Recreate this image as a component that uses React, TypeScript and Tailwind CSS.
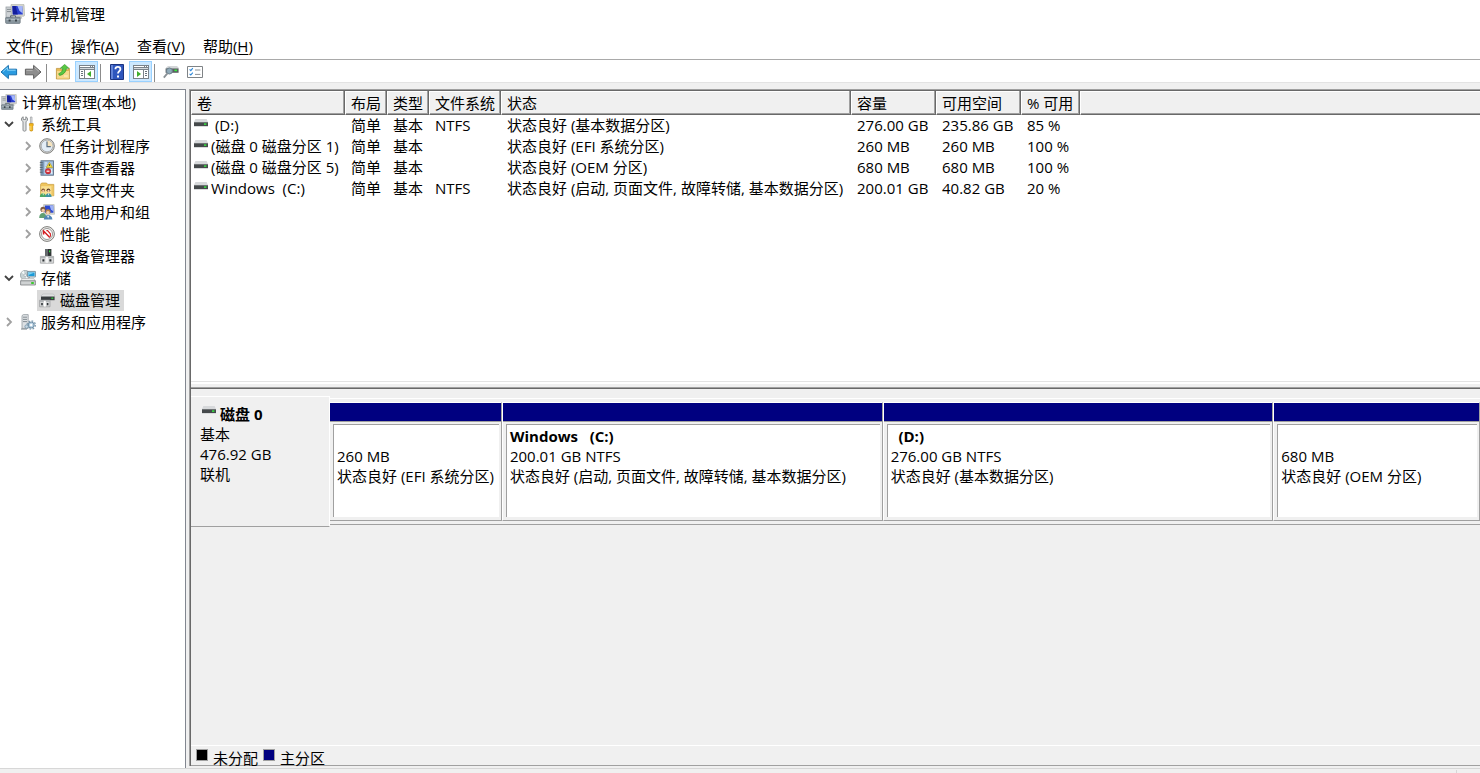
import { useState, type ReactNode } from "react"
import clsx from "clsx"

type IconProps = { size?: number }

function ComputerIcon({ size = 16 }: IconProps) {
  return (
    <svg width={size} height={size} viewBox="0 0 20 20" className="shrink-0">
      <rect x="1" y="3" width="6" height="11" fill="#cfd3d6" stroke="#9aa1a6" strokeWidth=".8" />
      <path d="M2 5.4h4M2 7.6h4" stroke="#868d92" />
      <path d="M6 .6h13l.6 11-1 .6H6.4z" fill="#d6d7d0" stroke="#a9aba4" strokeWidth=".6" />
      <path d="M7.4 2h9.8l.6 8.4H7.8z" fill="#2a3fd0" />
      <path d="M12.4 2h4.8l.5 7.4-3.3-2.6z" fill="#a4b6fa" />
      <path d="M7.4 2h3.2l2.2 8.4h-5z" fill="#141f9c" />
      <path d="M10 12.2h6l1.4 2.2H10z" fill="#b1b5b4" />
      <rect x=".6" y="13.4" width="14.6" height="6" rx=".8" fill="#8a979f" stroke="#65717a" strokeWidth=".7" />
      <path d="M5.5 13.2v-1.4h5v1.4" fill="none" stroke="#5d6970" />
      <path d="M1.4 15.4h13" stroke="#c3ccd2" strokeWidth=".8" />
      <path d="M3.6 15.4v2h2v-2zM10 15.4v2h2v-2z" fill="#3d464c" />
    </svg>
  )
}

function ToolsIcon() {
  return (
    <svg width="16" height="16" viewBox="0 0 16 16" className="shrink-0">
      <path
        d="M3.2.8 1.8 1.8 1.4 4l1.6 1.8v8.4c0 1.3 3 1.3 3 0V5.8L7.6 4l-.4-2.2L5.8.8v2.8H3.2z"
        fill="#e3e4e5"
        stroke="#7f8386"
        strokeWidth=".9"
      />
      <path d="M10.4 1h1.6v6.4h-1.6z" fill="#e6e7e8" stroke="#8b8f92" strokeWidth=".6" />
      <path d="M9.4 7.6h3.8v1.8l-.5.8v4c0 1.2-2.8 1.2-2.8 0v-4l-.5-.8z" fill="#f5b81d" stroke="#c08a13" strokeWidth=".7" />
      <path d="M10.8 10v4" stroke="#ffe390" strokeWidth=".8" />
    </svg>
  )
}

function ClockIcon() {
  return (
    <svg width="16" height="16" viewBox="0 0 16 16" className="shrink-0">
      <circle cx="8" cy="8" r="7.3" fill="#d7d7d5" stroke="#82827f" strokeWidth="1" />
      <circle cx="8" cy="8" r="5.8" fill="#e3edf6" stroke="#9a9fa3" strokeWidth=".7" />
      <path d="M8 8.4V2.4a5.8 5.8 0 0 1 5.6 6z" fill="#f6e3bd" />
      <path d="M8 3.6v5h3.8" fill="none" stroke="#5b6e80" strokeWidth="1.2" />
    </svg>
  )
}

function EventIcon() {
  return (
    <svg width="16" height="16" viewBox="0 0 16 16" className="shrink-0">
      <rect x="2" y=".8" width="12.4" height="14.4" fill="#a7c3e3" stroke="#56697e" strokeWidth=".9" />
      <path d="M2.4 1.2h2.4v13.6H2.4z" fill="#7590ae" />
      <path d="M.8 2.6h2.8M.8 5h2.8M.8 7.4h2.8M.8 9.8h2.8M.8 12.2h2.8" stroke="#545d66" strokeWidth=".9" />
      <path d="M6 3h2M6 5h1.6M6 7.4h1M6 12.8h1M12.6 9v4.6M12 13h1.6" stroke="#eef5fb" strokeWidth=".9" />
      <path d="m10.4 2.4 3.2 5.2H7.2z" fill="#f5dc3c" stroke="#b5950f" strokeWidth=".6" />
      <path d="M10.4 4.2V6" stroke="#333" strokeWidth=".9" />
      <circle cx="9" cy="11.2" r="2.7" fill="#d9343c" stroke="#a31b22" strokeWidth=".5" />
      <path d="M7.6 11.2h2.8" stroke="#fff" strokeWidth="1.1" />
    </svg>
  )
}

function SharedFolderIcon() {
  return (
    <svg width="16" height="16" viewBox="0 0 16 16" className="shrink-0">
      <path d="M1.6 2.4 2.6 1h5l1 1.4h6.2v11.4H1.6z" fill="#efc55e" stroke="#c59a36" strokeWidth=".7" />
      <path d="M2.2 4.2h12v9.2h-12z" fill="#f9df92" />
      <path d="M12.4 4.2h1.8v9.2h-1.8z" fill="#eec765" />
      <circle cx="4.2" cy="8.2" r="1.8" fill="#7b4b2a" />
      <circle cx="4.3" cy="9" r="1.2" fill="#f1c9a2" />
      <path d="M.8 15c0-5 6-5 6.4 0z" fill="#4da866" />
      <circle cx="9.4" cy="8.2" r="1.8" fill="#4c3323" />
      <circle cx="9.5" cy="9" r="1.2" fill="#f1c9a2" />
      <path d="M6.4 15c.2-5 6-5 6.2 0z" fill="#3f93a6" />
      <path d="m3.5 11.6.7 1.8.7-1.8zM8.8 11.6l.7 1.8.7-1.8z" fill="#fff" />
    </svg>
  )
}

function UsersIcon() {
  return (
    <svg width="16" height="16" viewBox="0 0 16 16" className="shrink-0">
      <path d="M4.6.6h10.6l.4 9.6H4.6z" fill="#dcddd6" stroke="#aeb0a9" strokeWidth=".6" />
      <path d="M5.8 1.6h8.4l.3 7.2H5.8z" fill="#2c49d2" />
      <path d="M10.6 1.6h3.6l.3 6-2.6-2z" fill="#9db2f8" />
      <circle cx="4" cy="5.4" r="2.6" fill="#7d5a40" />
      <circle cx="4.2" cy="6.4" r="1.7" fill="#f0c8a5" />
      <path d="M.2 14c0-6.6 7-6.6 7.4 0z" fill="#5f9f72" />
      <circle cx="9" cy="7.8" r="2.5" fill="#b98543" />
      <circle cx="9" cy="8.8" r="1.7" fill="#f5d3b0" />
      <path d="M4.8 15.6c.2-6 8.4-6 8.6 0z" fill="#5086b7" />
      <path d="m8.2 11.8.9 2.6.9-2.6z" fill="#fff" />
    </svg>
  )
}

function PerformanceIcon() {
  return (
    <svg width="16" height="16" viewBox="0 0 16 16" className="shrink-0">
      <circle cx="8" cy="8" r="7.4" fill="#ececea" stroke="#7e7e7b" strokeWidth="1" />
      <circle cx="8" cy="8" r="5.5" fill="#fff" stroke="#8f8f8c" strokeWidth=".9" />
      <path d="M4.6 8.6V5l6.2 6.4" fill="none" stroke="#d51e22" strokeWidth="1.5" />
      <path d="M7.4 4.6h1.2l2.8 3.2v3" fill="none" stroke="#d51e22" strokeWidth="1.1" />
    </svg>
  )
}

function DeviceIcon() {
  return (
    <svg width="16" height="16" viewBox="0 0 16 16" className="shrink-0">
      <path d="M6 1h6.4v7H6z" fill="#303436" />
      <path d="M6 1h3v7H6z" fill="#63686b" />
      <path d="M10 2.4h1.2v1.8H10z" fill="#2ee53f" />
      <path d="M1.4 8.4h13.2v6.8H1.4z" fill="#d9dadb" stroke="#97999b" strokeWidth=".7" />
      <path d="M1.8 8.8h12.4v1.4H1.8z" fill="#b3b6b8" />
      <path d="M3.4 11.2h2v2.4h-2zM10.4 11.2h2v2.4h-2z" fill="#303538" />
      <path d="M6.6 8.8h2.6v6H6.6z" fill="#f4f5f5" />
    </svg>
  )
}

function StorageIcon() {
  return (
    <svg width="16" height="16" viewBox="0 0 16 16" className="shrink-0">
      <circle cx="5.2" cy="5.2" r="4.8" fill="#c6d2d4" stroke="#8e999c" strokeWidth=".7" />
      <path d="M5.2 5.2 1.4 2.6 3.6.8zM5.2 5.2l3.4 2.6-2 1.6z" fill="#f2f7f7" />
      <circle cx="5.2" cy="5.2" r="1.3" fill="#fff" stroke="#8b979e" strokeWidth=".6" />
      <rect x="7.4" y="1.4" width="8.2" height="5.6" rx=".5" fill="#cfe0e8" stroke="#4f7183" strokeWidth=".7" />
      <path d="M8.4 2.4h6.2V6H8.4z" fill="#1b9bd8" />
      <path d="M8.4 2.4h6.2L8.4 5z" fill="#7ed1f1" />
      <path d="m.8 11 1.4-2.4h11.6l1.4 2.4z" fill="#f3f4f4" stroke="#a1a4a6" strokeWidth=".6" />
      <path d="M.6 10.8h14.8V15H.6z" fill="#cfd2d3" stroke="#7b7f81" strokeWidth=".8" />
      <path d="M11.2 12h2.6v2h-2.6z" fill="#3bc92f" />
    </svg>
  )
}

function DiskMgmtIcon() {
  return (
    <svg width="16" height="16" viewBox="0 0 16 16" className="shrink-0">
      <path d="M2.4 3.6 3.8 2h10.6l1.2 1.6v1H2.4z" fill="#dfe0e1" stroke="#aeb1b2" strokeWidth=".5" />
      <path d="M2 4.6h13.6v3.6H2z" fill="#393d3f" />
      <path d="M12.4 5.6h1.8v1.2h-1.8z" fill="#2ee53f" />
      <path d="M.6 8.2h10.4v6.6H.6z" fill="#d3d5d6" stroke="#97999b" strokeWidth=".7" />
      <path d="M1 8.6h9.6v1.2H1z" fill="#a9adaf" />
      <path d="M2.2 11h1.6v2.2H2.2zM7.8 11h1.6v2.2H7.8z" fill="#303538" />
      <path d="M4.8 8.8h2v5.8h-2z" fill="#fff" />
    </svg>
  )
}

function ServicesIcon() {
  return (
    <svg width="16" height="16" viewBox="0 0 16 16" className="shrink-0">
      <path d="M2 1.6 3.4.6h4.8v13.8H2z" fill="#dde1e4" stroke="#969ca1" strokeWidth=".8" />
      <path d="M3 3.2h4M3 5.4h4M3 7.6h4" stroke="#7b838a" strokeWidth=".9" />
      <path d="M1 15h6" stroke="#8e959a" strokeWidth="1.2" />
      <circle cx="11.2" cy="11" r="3" fill="#b4cfe2" stroke="#6d8ca3" strokeWidth="1" />
      <circle cx="11.2" cy="11" r="4.1" fill="none" stroke="#7e9bb0" strokeWidth="1.3" strokeDasharray="1.7 1.5" />
      <circle cx="11.2" cy="11" r="1.2" fill="#fff" />
      <circle cx="6.6" cy="12.6" r="1.7" fill="#c7d8e3" stroke="#7e9bb0" strokeWidth=".9" />
    </svg>
  )
}

function DriveIcon() {
  return (
    <svg width="14" height="8" viewBox="0 0 14 8" className="shrink-0">
      <path d="M1.4 0h11.2L14 3H0z" fill="#d7d9db" />
      <path d="M0 3h14v4H0z" fill="#45494b" />
      <path d="M0 3h14v1H0z" fill="#6e7274" />
      <path d="M10 4.4h2.4v1.4H10z" fill="#35f03f" />
      <path d="M0 7h14v1H0z" fill="#d9dbdc" />
    </svg>
  )
}

function ArrowIcon({ forward }: { forward?: boolean }) {
  return (
    <svg width="18" height="16" viewBox="0 0 18 16" className={clsx("shrink-0", forward && "rotate-180")}>
      <path
        d="M1 8 8.4 1.4v3.8H16.6v5.6H8.4v3.8z"
        fill={forward ? "#8d8d8d" : "#2a9be0"}
        stroke={forward ? "#5f5f5f" : "#176fae"}
        strokeWidth="1"
        strokeLinejoin="round"
      />
      <path
        d={forward ? "M9.4 9.6h6.2M7.4 12.4 3 8.6" : "M2.8 7.8 7.4 3.6v2.6h8.2"}
        fill="none"
        stroke={forward ? "#b5b5b5" : "#8bd6fa"}
        strokeWidth="1"
      />
    </svg>
  )
}

function FolderUpIcon() {
  return (
    <svg width="16" height="16" viewBox="0 0 16 16" className="shrink-0">
      <path d="M1.4 4.4h4.2l1 1.4h5.8l2-1.6v10.8h-13z" fill="#e7bb55" stroke="#b98d30" strokeWidth=".7" />
      <path d="M2 7h12v7.6H2z" fill="#f6d98c" />
      <path d="M9 12h3.8" stroke="#fff3cc" />
      <path
        d="M3.6 9.8C6.6 8.6 7.6 6.6 7.8 4.2H5.4L9.6.4l4.2 3.8h-2.4c-.4 4-3 6.6-6.8 7.2z"
        fill="#58c943"
        stroke="#36932a"
        strokeWidth=".7"
      />
    </svg>
  )
}

function PaneIcon({ right }: { right?: boolean }) {
  return (
    <svg width="16" height="14" viewBox="0 0 16 14" shapeRendering="crispEdges" className="shrink-0">
      <path d="M0 0h16v14H0z" fill="#7a828a" />
      <path d="M1 1h10v1H1zM12 1h1v1h-1zM14 1h1v1h-1z" fill="#fff" />
      <path d="M1 3h14v1H1z" fill="#d5dade" />
      <path d={right ? "M1 5h9v8H1zM11 5h4v8h-4z" : "M1 5h4v8H1zM6 5h9v8H6z"} fill="#fff" />
      <path d={right ? "M12 6h2v1h-2zM12 8h2v1h-2zM12 10h2v1h-2z" : "M2 6h2v1H2zM2 8h2v1H2zM2 10h2v1H2z"} fill="#68737c" />
      <path d={right ? "M4 6v6l4-3z" : "M12 6v6L8 9z"} fill="#3fae2a" shapeRendering="auto" />
    </svg>
  )
}

function HelpIcon() {
  return (
    <svg width="14" height="16" viewBox="0 0 14 16" className="shrink-0">
      <path d="M.5.5h13v15H.5z" fill="#2e56bd" stroke="#1c3480" />
      <path d="M1 1h2v14H1z" fill="#6384d8" />
      <path d="M5.4 5.2c0-3 5-3 5 0 0 2-2.4 2-2.4 4.4" fill="none" stroke="#fff" strokeWidth="1.8" />
      <path d="M7 11.4h2v2H7z" fill="#fff" />
    </svg>
  )
}

function RescanIcon() {
  return (
    <svg width="16" height="14" viewBox="0 0 16 14" className="shrink-0">
      <path d="M3 2.4 5 1h9l1.6 1.6v1H3z" fill="#d3d6d8" />
      <path d="M2.6 3.4h13v4.4h-13z" fill="#5a5f62" />
      <path d="M11.4 4.6h2.6v1.6h-2.6z" fill="#35f03f" />
      <circle cx="6.4" cy="6" r="3" fill="#8fa9b8" stroke="#6c7f8b" strokeWidth="1" />
      <path d="M4.4 8.4.8 12.6" stroke="#8a9196" strokeWidth="1.8" />
    </svg>
  )
}

function ChecklistIcon() {
  return (
    <svg width="16" height="14" viewBox="0 0 16 14" className="shrink-0">
      <path d="M.5 1.5h15v11H.5z" fill="#fff" stroke="#7f8386" />
      <path d="m2.6 4.4 1.2 1.2 2-2.4M2.6 8.8 3.8 10l2-2.4" fill="none" stroke="#2a86d8" strokeWidth="1.1" />
      <path d="M8 5h5.4M8 9.4h5.4" stroke="#8e9295" strokeWidth="1" />
    </svg>
  )
}

function Chevron({ open }: { open: boolean }) {
  return (
    <svg width="10" height="10" viewBox="0 0 10 10" fill="none">
      {open ? (
        <path d="M1 3l4 4 4-4" stroke="#404040" strokeWidth="1.8" />
      ) : (
        <path d="M3 1l4 4-4 4" stroke="#a0a0a0" strokeWidth="1.8" />
      )}
    </svg>
  )
}

const menus = [
  { label: "文件", mnemonic: "F" },
  { label: "操作", mnemonic: "A" },
  { label: "查看", mnemonic: "V" },
  { label: "帮助", mnemonic: "H" },
]

function ToolButton({ label, active, narrow, children }: { label: string; active?: boolean; narrow?: boolean; children: ReactNode }) {
  return (
    <button
      aria-label={label}
      className={clsx(
        "flex h-[21px] items-center justify-center",
        narrow ? "w-[18px]" : "w-[23px]",
        active && "border border-[#99d1ff] bg-[#cce8ff]"
      )}
    >
      {children}
    </button>
  )
}

function ToolSeparator() {
  return <div className="ml-0.5 mr-1 h-[18px] w-px bg-[#8c8c8c]" />
}

function Toolbar() {
  return (
    <div className="flex h-[23px] items-end border-b border-[#e3e3e3] bg-white">
      <div className="flex gap-[3px]">
        <ToolButton label="后退" narrow><ArrowIcon /></ToolButton>
        <ToolButton label="前进"><ArrowIcon forward /></ToolButton>
      </div>
      <ToolSeparator />
      <div className="flex gap-px">
        <ToolButton label="上一级"><FolderUpIcon /></ToolButton>
        <ToolButton label="控制台树" active><PaneIcon /></ToolButton>
      </div>
      <ToolSeparator />
      <div className="flex gap-px">
        <ToolButton label="帮助"><HelpIcon /></ToolButton>
        <ToolButton label="操作窗格" active><PaneIcon right /></ToolButton>
      </div>
      <ToolSeparator />
      <div className="flex gap-px">
        <ToolButton label="重新扫描"><RescanIcon /></ToolButton>
        <ToolButton label="属性"><ChecklistIcon /></ToolButton>
      </div>
    </div>
  )
}

type Node = { label: string; icon: ReactNode; level: number; open?: boolean }

const nodes: Node[] = [
  { label: "系统工具", icon: <ToolsIcon />, level: 1, open: true },
  { label: "任务计划程序", icon: <ClockIcon />, level: 2, open: false },
  { label: "事件查看器", icon: <EventIcon />, level: 2, open: false },
  { label: "共享文件夹", icon: <SharedFolderIcon />, level: 2, open: false },
  { label: "本地用户和组", icon: <UsersIcon />, level: 2, open: false },
  { label: "性能", icon: <PerformanceIcon />, level: 2, open: false },
  { label: "设备管理器", icon: <DeviceIcon />, level: 2 },
  { label: "存储", icon: <StorageIcon />, level: 1, open: true },
  { label: "磁盘管理", icon: <DiskMgmtIcon />, level: 2 },
  { label: "服务和应用程序", icon: <ServicesIcon />, level: 1, open: false },
]

function Tree() {
  const [selected, setSelected] = useState("磁盘管理")

  return (
    <nav className="w-[186px] shrink-0 border-r border-t border-[#828790] bg-white pt-px">
      <button className="flex h-[22px] items-center gap-[5px] pl-px">
        <ComputerIcon />
        <span>计算机管理(本地)</span>
      </button>
      <ul>
        {nodes.map((n) => (
          <li key={n.label} className={clsx("flex h-[22px] items-center", n.level === 2 && "pl-[19px]")}>
            <div className="flex w-[18px] justify-center">
              {n.open !== undefined && (
                <button aria-label={`展开 ${n.label}`}><Chevron open={n.open} /></button>
              )}
            </div>
            <button
              onClick={() => setSelected(n.label)}
              className={clsx("flex h-[21px] items-center gap-[5px] pl-0.5 pr-1", selected === n.label && "bg-[#d9d9d9]")}
            >
              {n.icon}
              <span>{n.label}</span>
            </button>
          </li>
        ))}
      </ul>
    </nav>
  )
}

const columns = ["卷", "布局", "类型", "文件系统", "状态", "容量", "可用空间", "% 可用"]

const volumes = [
  [" (D:)", "简单", "基本", "NTFS", "状态良好 (基本数据分区)", "276.00 GB", "235.86 GB", "85 %"],
  ["(磁盘 0 磁盘分区 1)", "简单", "基本", "", "状态良好 (EFI 系统分区)", "260 MB", "260 MB", "100 %"],
  ["(磁盘 0 磁盘分区 5)", "简单", "基本", "", "状态良好 (OEM 分区)", "680 MB", "680 MB", "100 %"],
  ["Windows  (C:)", "简单", "基本", "NTFS", "状态良好 (启动, 页面文件, 故障转储, 基本数据分区)", "200.01 GB", "40.82 GB", "20 %"],
]

function VolumeTable() {
  return (
    <div className="h-[290px] shrink-0 overflow-hidden bg-white">
      <table className="w-full table-fixed border-separate border-spacing-0 text-left">
        <colgroup>
          <col className="w-[154px]" />
          <col className="w-[42px]" />
          <col className="w-[42px]" />
          <col className="w-[72px]" />
          <col className="w-[350px]" />
          <col className="w-[85px]" />
          <col className="w-[85px]" />
          <col className="w-[59px]" />
          <col />
        </colgroup>
        <thead>
          <tr>
            {columns.map((c) => (
              <th
                key={c}
                className="h-6 whitespace-nowrap border-b border-l border-r border-b-[#696969] border-l-white border-r-[#696969] bg-[#f0f0f0] p-0 pl-[5px] pt-px font-normal leading-[21px] shadow-[inset_-1px_-1px_0_#a0a0a0,inset_0_1px_0_#fff]"
              >
                {c}
              </th>
            ))}
            <td className="h-6 border-b border-l border-b-[#696969] border-l-white bg-[#f0f0f0] p-0 shadow-[inset_0_-1px_0_#a0a0a0,inset_0_1px_0_#fff]" />
          </tr>
        </thead>
        <tbody>
          {volumes.map((row) => (
            <tr key={row[0]}>
              {row.map((cell, i) => (
                <td key={i} className={clsx("h-[21px] whitespace-pre p-0 leading-[21px]", i === 0 ? "pl-[3px]" : "pl-1.5")}>
                  {i === 0 ? (
                    <div className="flex gap-[3px]">
                      <div className="pt-1"><DriveIcon /></div>
                      {cell}
                    </div>
                  ) : (
                    cell
                  )}
                </td>
              ))}
              <td />
            </tr>
          ))}
        </tbody>
      </table>
    </div>
  )
}

const partitions = [
  { name: "", size: "260 MB", status: "状态良好 (EFI 系统分区)", width: "flex-[172]" },
  { name: "Windows   (C:)", size: "200.01 GB NTFS", status: "状态良好 (启动, 页面文件, 故障转储, 基本数据分区)", width: "flex-[381]" },
  { name: "  (D:)", size: "276.00 GB NTFS", status: "状态良好 (基本数据分区)", width: "flex-[391]" },
  { name: "", size: "680 MB", status: "状态良好 (OEM 分区)", width: "flex-[206]" },
]

function DiskView() {
  return (
    <div className="flex items-start">
      <div className="h-[131px] w-[139px] shrink-0 border-b border-r border-t border-b-[#a0a0a0] border-r-white border-t-white pl-[9px] pt-[7px] leading-5">
        <div className="flex gap-1 pl-0.5 font-bold">
          <div className="pt-0.5"><DriveIcon /></div>
          磁盘 0
        </div>
        <div>基本</div>
        <div>476.92 GB</div>
        <div>联机</div>
      </div>
      <div className="mt-0.5 flex h-[127px] min-w-0 flex-1 border-b border-t border-b-[#a0a0a0] border-t-white pb-[3px] pt-[3px]">
        {partitions.map((p) => (
          <div
            key={p.status}
            className={clsx(
              "flex min-w-0 flex-col border-b border-l border-r border-t border-b-[#a0a0a0] border-l-white border-r-[#a0a0a0] border-t-white first:border-l-0",
              p.width
            )}
          >
            <div className="h-[19px] shrink-0 border-b border-b-[#a0a0a0] bg-[#000080] shadow-[1px_0_0_#a0a0a0]" />
            <div className="mb-[3px] ml-[3px] mr-0.5 mt-0.5 flex-1 overflow-hidden whitespace-pre border-l border-t border-[#a0a0a0] bg-white pl-[3px] pt-px leading-5">
              <div className="h-5 font-bold">{p.name}</div>
              <div>{p.size}</div>
              <div>{p.status}</div>
            </div>
          </div>
        ))}
      </div>
    </div>
  )
}

function Legend() {
  return (
    <div className="flex h-5 items-start gap-[5px] border-t border-white pl-[5px] leading-6">
      <span className="mt-[3px] size-3 border border-[#a0a0a0] bg-black" />
      <span className="h-5">未分配</span>
      <span className="mt-[3px] size-3 border border-[#a0a0a0] bg-[#000080]" />
      <span className="h-5">主分区</span>
    </div>
  )
}

export default function App() {
  return (
    <div className="flex h-screen flex-col overflow-hidden bg-[#f0f0f0] font-['Open_Sans','Noto_Sans_CJK_SC',sans-serif] text-[15px] leading-5 text-black">
      <header className="bg-white">
        <div className="flex h-7 items-center gap-[5px] pl-[5px]">
          <ComputerIcon size={20} />
          <h1>计算机管理</h1>
        </div>
        <div className="flex h-8 items-center gap-[18px] border-b border-[#a9a9a9] pl-1.5 pt-1">
          {menus.map((m) => (
            <button key={m.mnemonic}>
              {m.label}(<span className="underline underline-offset-2">{m.mnemonic}</span>)
            </button>
          ))}
        </div>
        <Toolbar />
      </header>

      <div className="flex min-h-0 flex-1 gap-[3px] pt-1.5">
        <Tree />
        <main className="mb-0.5 flex min-w-0 flex-1 flex-col border-l border-t border-[#a0a0a0]">
          <div className="flex min-h-0 flex-1 flex-col border-l border-t border-[#696969]">
            <VolumeTable />
            <div className="h-2 shrink-0 border-b border-t border-b-[#696969] border-t-[#e3e3e3] bg-[#f0f0f0] shadow-[inset_0_-1px_0_#a0a0a0,inset_0_2px_0_#fff]" />
            <div className="min-h-0 flex-1 border-b border-[#a0a0a0]">
              <div className="flex h-full flex-col justify-between pt-[7px]">
                <DiskView />
                <Legend />
              </div>
            </div>
          </div>
        </main>
      </div>

      <footer className="flex h-[5px] shrink-0 justify-end border-t border-[#d7d7d7] pr-[23px] pt-px">
        <div className="w-px bg-[#d7d7d7]" />
      </footer>
    </div>
  )
}
